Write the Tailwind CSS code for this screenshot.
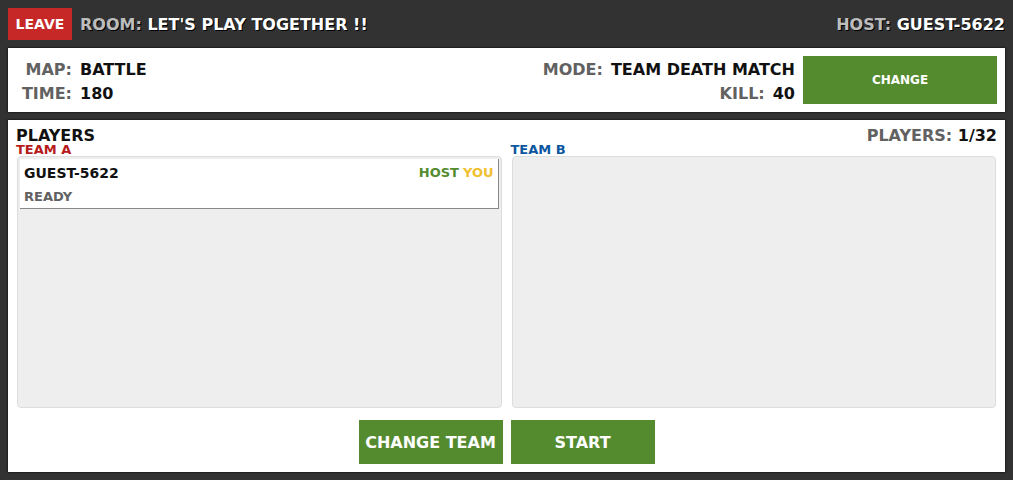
<!DOCTYPE html>
<html lang="en">
<head>
  <meta charset="UTF-8" />
  <meta name="viewport" content="width=device-width, initial-scale=1.0"/>
  <title>Room</title>
  <script src="https://cdn.jsdelivr.net/npm/@tailwindcss/browser@4"></script>
</head>
<body class="bg-[#323232] min-h-screen flex flex-col gap-2 p-2 font-['DejaVu_Sans',sans-serif] font-bold text-base leading-6 text-[#111] whitespace-nowrap">
  <header class="flex items-center justify-between h-8">
    <div class="flex items-center gap-2">
      <button type="button" class="w-16 h-8 bg-[#c62828] text-white text-sm">LEAVE</button>
      <h1 class="pt-0.5 text-white text-shadow-[1px_1px_0_#000]"><span class="text-[#bdbdbd]">ROOM:</span> LET'S PLAY TOGETHER !!</h1>
    </div>
    <p class="pt-0.5 text-white text-shadow-[1px_1px_0_#000]"><span class="text-[#bdbdbd]">HOST:</span> GUEST-5622</p>
  </header>

  <section class="flex gap-2 h-16 p-2 bg-white shadow-[0_0_2px_#000]">
    <dl class="grid grid-cols-[56px_1fr] auto-rows-[24px] gap-x-2 flex-1 pt-0.5">
      <dt class="text-right text-[#616161]">MAP:</dt>
      <dd>BATTLE</dd>
      <dt class="text-right text-[#616161]">TIME:</dt>
      <dd>180</dd>
    </dl>
    <dl class="flex-1 pt-0.5">
      <div class="flex justify-end gap-2">
        <dt class="text-[#616161]">MODE:</dt>
        <dd>TEAM DEATH MATCH</dd>
      </div>
      <div class="flex justify-end gap-2">
        <dt class="text-[#616161]">KILL:</dt>
        <dd>40</dd>
      </div>
    </dl>
    <button type="button" class="w-[194px] h-12 bg-[#558b2f] text-white text-xs">CHANGE</button>
  </section>

  <main class="flex flex-col flex-1 p-2 bg-white shadow-[0_0_2px_#000]">
    <div class="flex justify-between h-4 leading-4">
      <h2>PLAYERS</h2>
      <p><span class="text-[#616161]">PLAYERS:</span> 1/32</p>
    </div>

    <div class="flex gap-2 flex-1 text-[13px]">
      <section class="flex flex-col flex-1">
        <h3 class="text-[#b71c1c] leading-3">TEAM A</h3>
        <ul class="flex-1 mx-px mb-2 p-0.5 bg-[#eee] border border-[#ddd] rounded-sm">
          <li class="px-1 pt-0.5 h-[50px] bg-white border-r border-b border-[#888]">
            <div class="flex justify-between">
              <span class="text-sm leading-6">GUEST-5622</span>
              <span class="flex gap-1">
                <span class="text-[#558b2f]">HOST</span>
                <span class="text-[#f0c030]">YOU</span>
              </span>
            </div>
            <p class="text-[#616161]">READY</p>
          </li>
        </ul>
      </section>
      <section class="flex flex-col flex-1">
        <h3 class="text-[#0d57a1] leading-3">TEAM B</h3>
        <ul class="flex-1 mx-px mb-2 p-0.5 bg-[#eee] border border-[#ddd] rounded-sm"></ul>
      </section>
    </div>

    <div class="flex justify-center gap-2 pt-1">
      <button type="button" class="w-36 h-11 pt-0.5 bg-[#558b2f] text-white">CHANGE TEAM</button>
      <button type="button" class="w-36 h-11 pt-0.5 bg-[#558b2f] text-white">START</button>
    </div>
  </main>
</body>
</html>
